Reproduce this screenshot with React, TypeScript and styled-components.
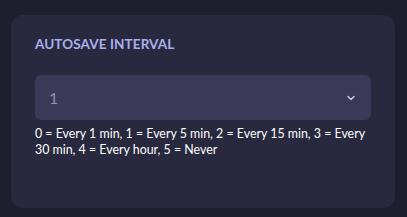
import styled, { createGlobalStyle } from "styled-components";

const GlobalStyle = createGlobalStyle`
    html, body {
        margin: 0;
        padding: 0;
        background: #1e1e2e;
        font-family: Lato, "Open Sans", sans-serif;
    }
`;

const Page = styled.div`
    padding: 15px 12px 9px 11px;
`;

const Card = styled.section`
    background: #28283e;
    border-radius: 12px;
    height: 193px;
    box-sizing: border-box;
    padding: 20px 24px 0 24px;
`;

const Title = styled.h3`
    margin: 0 0 21px 0;
    font-size: 13.5px;
    line-height: 19px;
    font-weight: 700;
    color: #a8b0ee;
    letter-spacing: 0.1px;
`;

const SelectBox = styled.div`
    display: flex;
    align-items: center;
    justify-content: space-between;
    height: 45px;
    box-sizing: border-box;
    padding: 0 14px;
    background: #3a3a58;
    border-radius: 6px;
`;

const Value = styled.span`
    font-size: 16px;
    color: #8d8faa;
`;

const Help = styled.p`
    margin: 6px 0 0 0;
    font-size: 12.4px;
    line-height: 16px;
    color: #ffffff;
`;

const Chevron = () => (
    <svg width="12" height="12" viewBox="0 0 24 24" fill="none" stroke="#c4c8dc" strokeWidth="3" strokeLinecap="round" strokeLinejoin="round">
        <path d="M6 9l6 6 6-6" />
    </svg>
);

const App = () => {
    return (
        <Page>
            <GlobalStyle />
            <Card>
                <Title>AUTOSAVE INTERVAL</Title>
                <SelectBox>
                    <Value>1</Value>
                    <Chevron />
                </SelectBox>
                <Help>0 = Every 1 min, 1 = Every 5 min, 2 = Every 15 min, 3 = Every 30 min, 4 = Every hour, 5 = Never</Help>
            </Card>
        </Page>
    );
};

export default App;
